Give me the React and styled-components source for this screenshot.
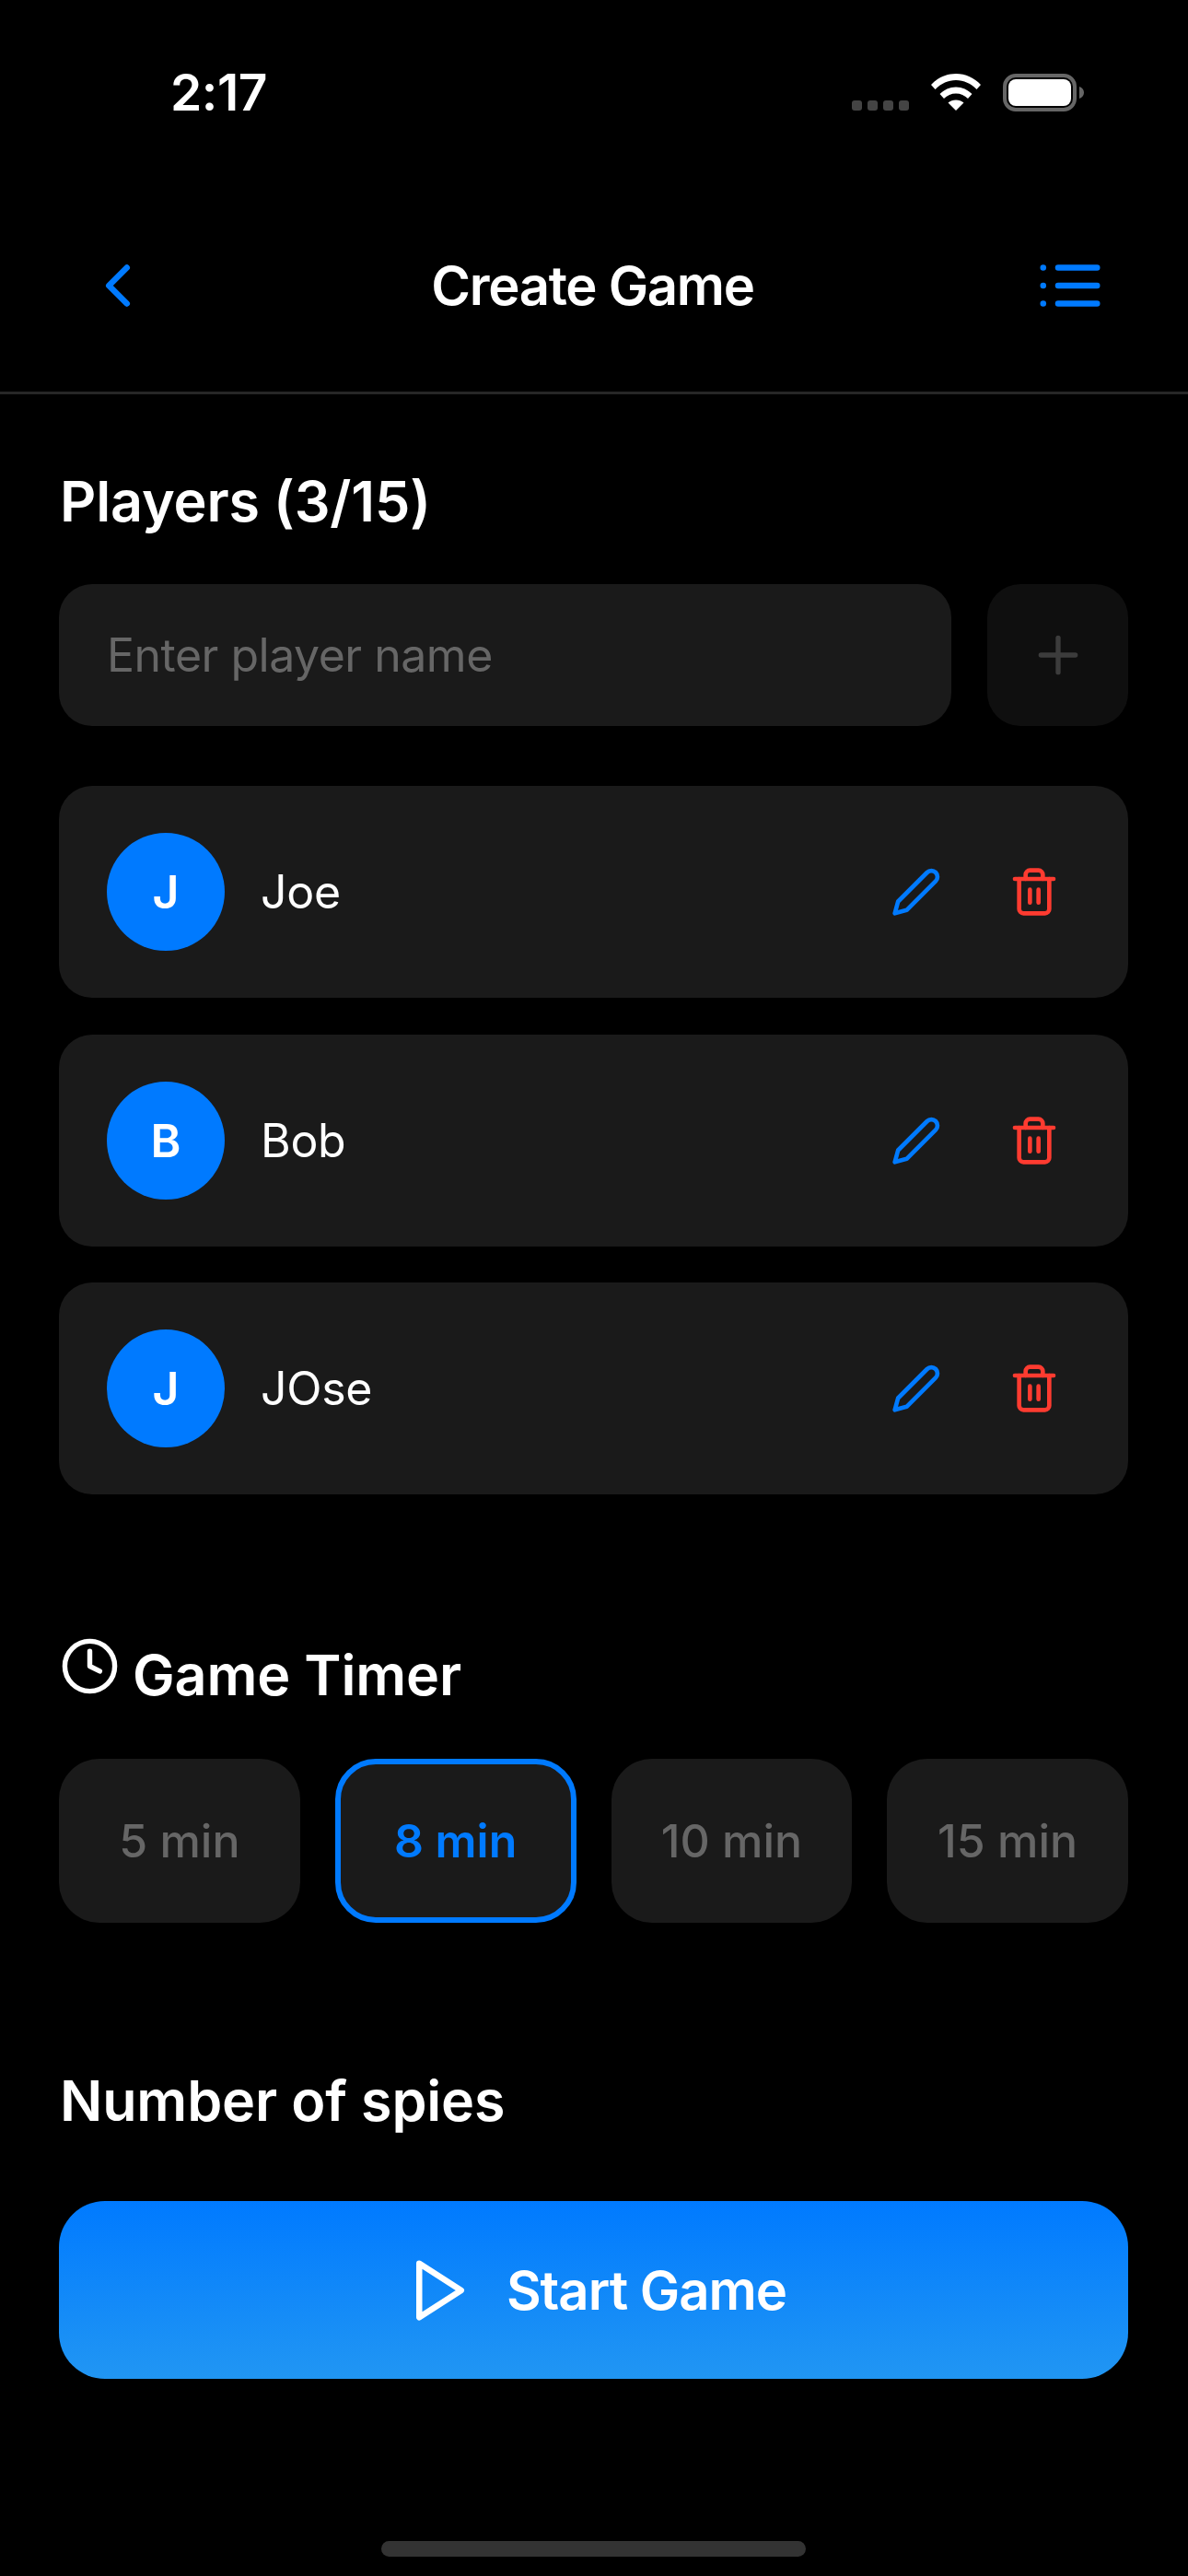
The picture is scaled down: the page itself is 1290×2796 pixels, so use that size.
import React from 'react';
import styled, { createGlobalStyle } from 'styled-components';
import { FiChevronLeft, FiClock, FiEdit2, FiList, FiPlay, FiPlus, FiTrash2 } from 'react-icons/fi';

const Global = createGlobalStyle`
    * { box-sizing: border-box; }
    html, body { margin: 0; background: #000; }
    body { font-family: Inter, "Noto Sans", sans-serif; color: #fff; }
`;

const Page = styled.div`
    width: 1290px;
    height: 2796px;
    background: #000;
    display: flex;
    flex-direction: column;
    overflow: hidden;
`;

const Header = styled.header`
    height: 428px;
    border-bottom: 3px solid #262626;
`;

const StatusBar = styled.div`
    height: 200px;
    padding: 0 113px 0 185px;
    display: flex;
    align-items: center;
    justify-content: space-between;
`;

const Time = styled.span`
    font-size: 55px;
    font-weight: 600;
    letter-spacing: -0.4px;
    line-height: 72px;
`;

const StatusIcons = styled.div`
    display: flex;
    align-items: center;
    gap: 24px;
`;

const Signal = styled.div`
    display: flex;
    gap: 6px;
    margin-top: 28px;
`;

const SignalDot = styled.i`
    width: 11px;
    height: 11px;
    border-radius: 3px;
    background: #444;
`;

const NavBar = styled.nav`
    height: 220px;
    padding: 0 89px;
    display: flex;
    align-items: center;
    justify-content: space-between;
    color: #007aff;
`;

const NavTitle = styled.h1`
    margin: 0 3px 0 0;
    font-size: 58px;
    font-weight: 600;
    letter-spacing: -1.3px;
    line-height: 72px;
    color: #fff;
`;

const Content = styled.main`
    padding: 82px 65px 0 64px;
    display: flex;
    flex-direction: column;
`;

const SectionTitle = styled.h2`
    margin: ${(p) => p.$top || 0}px 0 0;
    padding-left: 1px;
    height: 72px;
    display: flex;
    align-items: flex-start;
    gap: 14px;
    font-size: 61px;
    font-weight: 600;
    letter-spacing: -0.15px;
    line-height: 68px;
    svg { margin-top: -8px; flex: none; }
`;

const InputRow = styled.div`
    margin-top: 52px;
    display: flex;
    gap: 39px;
`;

const NameInput = styled.input`
    flex: 1;
    min-width: 0;
    height: 154px;
    padding: 0 52px;
    border: 0;
    border-radius: 36px;
    outline: 0;
    background: #1a1a1a;
    color: #fff;
    font: 400 50px Inter, sans-serif;
    letter-spacing: -0.5px;
    &::placeholder { color: #666; opacity: 1; }
`;

const AddButton = styled.button`
    width: 153px;
    height: 154px;
    padding: 0;
    border: 0;
    border-radius: 36px;
    background: #0f0f0f;
    color: #3c3c3c;
    display: flex;
    align-items: center;
    justify-content: center;
`;

const PlayerList = styled.div`
    margin-top: 65px;
    display: flex;
    flex-direction: column;
    gap: 39.5px;
`;

const PlayerRow = styled.div`
    height: 230px;
    padding: 0 74px 0 52px;
    border-radius: 36px;
    background: #1a1a1a;
    display: flex;
    align-items: center;
`;

const Avatar = styled.div`
    width: 128px;
    height: 128px;
    border-radius: 50%;
    background: #007aff;
    display: flex;
    align-items: center;
    justify-content: center;
    font-size: 50px;
    font-weight: 600;
`;

const PlayerName = styled.span`
    margin-left: 39px;
    flex: 1;
    font-size: 50px;
    letter-spacing: -0.3px;
    line-height: 60px;
`;

const Actions = styled.div`
    display: flex;
    gap: 72px;
`;

const IconAction = styled.span`
    display: flex;
    color: ${(p) => p.$color};
`;

const TimerGrid = styled.div`
    margin-top: 53px;
    display: grid;
    grid-template-columns: repeat(4, 1fr);
    gap: 38px;
`;

const TimerChip = styled.div`
    height: 178px;
    border-radius: 44px;
    background: #1a1a1a;
    border: ${(p) => (p.$active ? '6px solid #007aff' : '0')};
    color: ${(p) => (p.$active ? '#007aff' : '#666')};
    font-size: 50px;
    font-weight: ${(p) => (p.$active ? 600 : 500)};
    display: flex;
    align-items: center;
    justify-content: center;
`;

const StartButton = styled.button`
    margin-top: 71px;
    height: 193px;
    padding: 0 0 0 4px;
    border: 0;
    border-radius: 50px;
    background: linear-gradient(180deg, #007aff 0%, #2196f3 100%);
    color: #fff;
    font: 600 58px Inter, sans-serif;
    letter-spacing: -1px;
    display: flex;
    align-items: center;
    justify-content: center;
    gap: 33px;
`;

const HomeIndicator = styled.div`
    width: 461px;
    height: 17px;
    margin: 176px auto 0;
    border-radius: 9px;
    background: #333;
`;

const Wifi = () => (
    <svg width="54" height="40" viewBox="0 0 54 40" fill="#fff">
        <path d="M0 12C7 4.500 16.500 0 27 0s20 4.500 27 12l-4.500 5C43.500 10.800 35.500 7 27 7S10.500 10.800 4.500 17z" />
        <path d="M9.500 22C14 17.500 20.200 14.500 27 14.500S40 17.500 44.500 22L40 27c-3.500-3.500-8-5.500-13-5.500S17.500 23.500 14 27z" />
        <path d="M18.500 31.500c2.300-2 5.300-3 8.500-3s6.200 1 8.500 3L27 40z" />
    </svg>
);

const Battery = () => (
    <svg width="88" height="41" viewBox="0 0 88 41">
        <rect x="2" y="2" width="76" height="37" rx="12" fill="none" stroke="#666" strokeWidth="4" />
        <rect x="6" y="6" width="68" height="29" rx="8" fill="#fff" />
        <path d="M83 14c3 1 5 3.500 5 6.500S86 26 83 27z" fill="#666" />
    </svg>
);

const players = ['Joe', 'Bob', 'JOse'];
const timers = [
    { label: '5 min' },
    { label: '8 min', active: true },
    { label: '10 min' },
    { label: '15 min' },
];

export default function App() {
    return (
        <Page>
            <Global />
            <Header>
                <StatusBar>
                    <Time>2:17</Time>
                    <StatusIcons>
                        <Signal>
                            <SignalDot />
                            <SignalDot />
                            <SignalDot />
                            <SignalDot />
                        </Signal>
                        <Wifi />
                        <Battery />
                    </StatusIcons>
                </StatusBar>
                <NavBar>
                    <FiChevronLeft size={78} />
                    <NavTitle>Create Game</NavTitle>
                    <FiList size={78} />
                </NavBar>
            </Header>
            <Content>
                <SectionTitle>Players (3/15)</SectionTitle>
                <InputRow>
                    <NameInput placeholder="Enter player name" />
                    <AddButton>
                        <FiPlus size={64} />
                    </AddButton>
                </InputRow>
                <PlayerList>
                    {players.map((name) => (
                        <PlayerRow key={name}>
                            <Avatar>{name[0]}</Avatar>
                            <PlayerName>{name}</PlayerName>
                            <Actions>
                                <IconAction $color="#007aff"><FiEdit2 size={56} /></IconAction>
                                <IconAction $color="#ff3b30"><FiTrash2 size={56} /></IconAction>
                            </Actions>
                        </PlayerRow>
                    ))}
                </PlayerList>
                <SectionTitle $top={162}>
                    <FiClock size={65} />
                    Game Timer
                </SectionTitle>
                <TimerGrid>
                    {timers.map((t) => (
                        <TimerChip key={t.label} $active={t.active}>{t.label}</TimerChip>
                    ))}
                </TimerGrid>
                <SectionTitle $top={159}>Number of spies</SectionTitle>
                <StartButton>
                    <FiPlay size={78} />
                    Start Game
                </StartButton>
                <HomeIndicator />
            </Content>
        </Page>
    );
}
